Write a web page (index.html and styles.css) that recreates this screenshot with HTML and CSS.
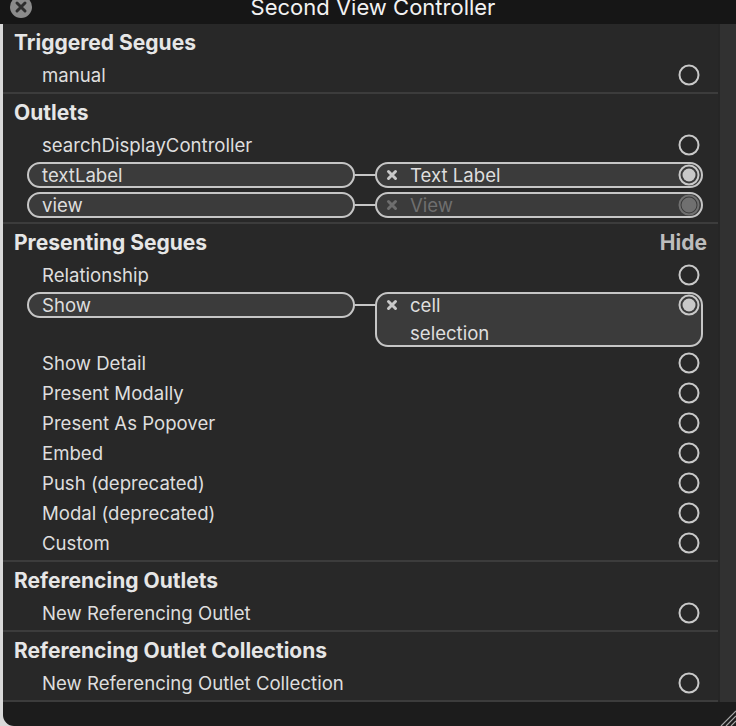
FILE: index.html
```html
<!DOCTYPE html>
<html>
<head>
<meta charset="utf-8">
<link rel="stylesheet" href="styles.css">
</head>
<body>
<div class="titlebar">
  <span class="close"><svg viewBox="0 0 22 22"><circle cx="11" cy="11" r="11" fill="#8b8b8b"/><path d="M7 7L15 15M15 7L7 15" stroke="#2e2e2e" stroke-width="3" stroke-linecap="round"/></svg></span>
  <span class="title">Second View Controller</span>
</div>
<div class="main">
  <div class="panel">
    <section class="sec">
      <div class="head">Triggered Segues</div>
      <div class="row"><span>manual</span><svg class="port" viewBox="0 0 22 22"><circle cx="11" cy="11" r="9.5"/></svg></div>
    </section>
    <section class="sec">
      <div class="head">Outlets</div>
      <div class="row"><span>searchDisplayController</span><svg class="port" viewBox="0 0 22 22"><circle cx="11" cy="11" r="9.5"/></svg></div>
      <div class="conn">
        <div class="pill lpill">textLabel</div>
        <div class="link"></div>
        <div class="pill rpill">
          <svg class="xic" viewBox="0 0 12 12"><path d="M2.5 2.5L9.5 9.5M9.5 2.5L2.5 9.5"/></svg>
          <div class="lines"><span>Text Label</span></div>
          <svg class="port on" viewBox="0 0 22 22"><circle cx="11" cy="11" r="9.5"/><circle class="dot" cx="11" cy="11" r="6.5"/></svg>
        </div>
      </div>
      <div class="conn">
        <div class="pill lpill">view</div>
        <div class="link"></div>
        <div class="pill rpill dim">
          <svg class="xic" viewBox="0 0 12 12"><path d="M2.5 2.5L9.5 9.5M9.5 2.5L2.5 9.5"/></svg>
          <div class="lines"><span>View</span></div>
          <svg class="port on" viewBox="0 0 22 22"><circle cx="11" cy="11" r="9.5"/><circle class="dot" cx="11" cy="11" r="6.5"/></svg>
        </div>
      </div>
    </section>
    <section class="sec">
      <div class="head"><span>Presenting Segues</span><span class="hide">Hide</span></div>
      <div class="row"><span>Relationship</span><svg class="port" viewBox="0 0 22 22"><circle cx="11" cy="11" r="9.5"/></svg></div>
      <div class="conn tall">
        <div class="pill lpill">Show</div>
        <div class="link"></div>
        <div class="pill rpill">
          <svg class="xic" viewBox="0 0 12 12"><path d="M2.5 2.5L9.5 9.5M9.5 2.5L2.5 9.5"/></svg>
          <div class="lines"><span>cell</span><span>selection</span></div>
          <svg class="port on" viewBox="0 0 22 22"><circle cx="11" cy="11" r="9.5"/><circle class="dot" cx="11" cy="11" r="6.5"/></svg>
        </div>
      </div>
      <div class="row"><span>Show Detail</span><svg class="port" viewBox="0 0 22 22"><circle cx="11" cy="11" r="9.5"/></svg></div>
      <div class="row"><span>Present Modally</span><svg class="port" viewBox="0 0 22 22"><circle cx="11" cy="11" r="9.5"/></svg></div>
      <div class="row"><span>Present As Popover</span><svg class="port" viewBox="0 0 22 22"><circle cx="11" cy="11" r="9.5"/></svg></div>
      <div class="row"><span>Embed</span><svg class="port" viewBox="0 0 22 22"><circle cx="11" cy="11" r="9.5"/></svg></div>
      <div class="row"><span>Push (deprecated)</span><svg class="port" viewBox="0 0 22 22"><circle cx="11" cy="11" r="9.5"/></svg></div>
      <div class="row"><span>Modal (deprecated)</span><svg class="port" viewBox="0 0 22 22"><circle cx="11" cy="11" r="9.5"/></svg></div>
      <div class="row"><span>Custom</span><svg class="port" viewBox="0 0 22 22"><circle cx="11" cy="11" r="9.5"/></svg></div>
    </section>
    <section class="sec">
      <div class="head">Referencing Outlets</div>
      <div class="row"><span>New Referencing Outlet</span><svg class="port" viewBox="0 0 22 22"><circle cx="11" cy="11" r="9.5"/></svg></div>
    </section>
    <section class="sec">
      <div class="head">Referencing Outlet Collections</div>
      <div class="row"><span>New Referencing Outlet Collection</span><svg class="port" viewBox="0 0 22 22"><circle cx="11" cy="11" r="9.5"/></svg></div>
    </section>
  </div>
  <div class="edge-right"></div>
</div>
<div class="footer">
  <svg class="grip" viewBox="0 0 16 22"><path d="M1 22L16 7M6 22L16 12M11 22L16 17"/></svg>
</div>
</body>
</html>
```
FILE: styles.css
```css
* { box-sizing: border-box; }
html, body { margin: 0; padding: 0; }
body {
  width: 736px;
  height: 726px;
  overflow: hidden;
  background: #d9d9d9;
  font-family: Inter, "Noto Sans", "Liberation Sans", sans-serif;
  color: #dedede;
}
.titlebar {
  position: relative;
  height: 24px;
  background: #161616;
  overflow: hidden;
  display: flex;
  justify-content: center;
  padding-left: 10px;
}
.title {
  font-size: 22px;
  line-height: 22px;
  margin-top: -4px;
  color: #f2f2f2;
  white-space: nowrap;
}
.close {
  position: absolute;
  left: 10px;
  top: -4px;
  width: 22px;
  height: 22px;
}
.close svg { display: block; width: 22px; height: 22px; }
.main {
  display: flex;
  margin-left: 3px;
}
.panel {
  width: 715px;
  background: #282828;
}
.edge-right {
  flex: 1;
  background: #313131;
  border-left: 2px solid #262626;
}
.sec {
  padding: 4px 0 2px;
  border-bottom: 2px solid #3c3c3c;
}
.head {
  height: 30px;
  line-height: 30px;
  margin-bottom: 2px;
  padding: 0 11px 0 11px;
  font-size: 21px;
  font-weight: 700;
  color: #e6e6e6;
  display: flex;
  justify-content: space-between;
}
.hide { color: #bdbdbd; }
.row {
  height: 30px;
  display: flex;
  align-items: center;
  justify-content: space-between;
  padding: 0 18px 0 39px;
  font-size: 18.6px;
}
.port {
  display: block;
  width: 22px;
  height: 22px;
  flex: none;
}
.port circle {
  fill: none;
  stroke: #c9c9c9;
  stroke-width: 2;
}
.port .dot { fill: #c9c9c9; stroke: none; }
.conn {
  display: flex;
  align-items: flex-start;
  padding: 2px 0 2px 24px;
  font-size: 18.6px;
}
.conn.tall { padding-bottom: 1px; }
.pill {
  width: 328px;
  border: 2px solid #c6c6c6;
  border-radius: 13px;
  background: #3b3b3b;
  line-height: 22px;
  flex: none;
}
.lpill { padding-left: 13px; }
.link {
  width: 20px;
  height: 2px;
  margin-top: 12px;
  background: #c6c6c6;
  flex: none;
}
.rpill {
  display: flex;
  align-items: flex-start;
  padding: 0 1px 0 9px;
}
.conn.tall .rpill { padding-bottom: 1px; }
.xic {
  width: 12px;
  height: 12px;
  margin-top: 5px;
  flex: none;
}
.xic path {
  stroke: #c9c9c9;
  stroke-width: 3;
  stroke-linecap: round;
}
.lines {
  flex: 1;
  display: flex;
  flex-direction: column;
  gap: 6px;
  padding-left: 12px;
}
.dim .lines { color: #6f6f6f; }
.dim .xic path { stroke: #6e6e6e; }
.dim .port circle { stroke: #707070; }
.dim .port .dot { fill: #707070; }
.footer {
  position: relative;
  height: 24px;
  margin-left: 3px;
  background: #1c1c1c;
  border-bottom-left-radius: 11px;
}
.grip {
  position: absolute;
  right: 0;
  bottom: 0;
  width: 16px;
  height: 22px;
}
.grip path {
  stroke: #a8a8a8;
  stroke-width: 1.2;
  fill: none;
}
```
